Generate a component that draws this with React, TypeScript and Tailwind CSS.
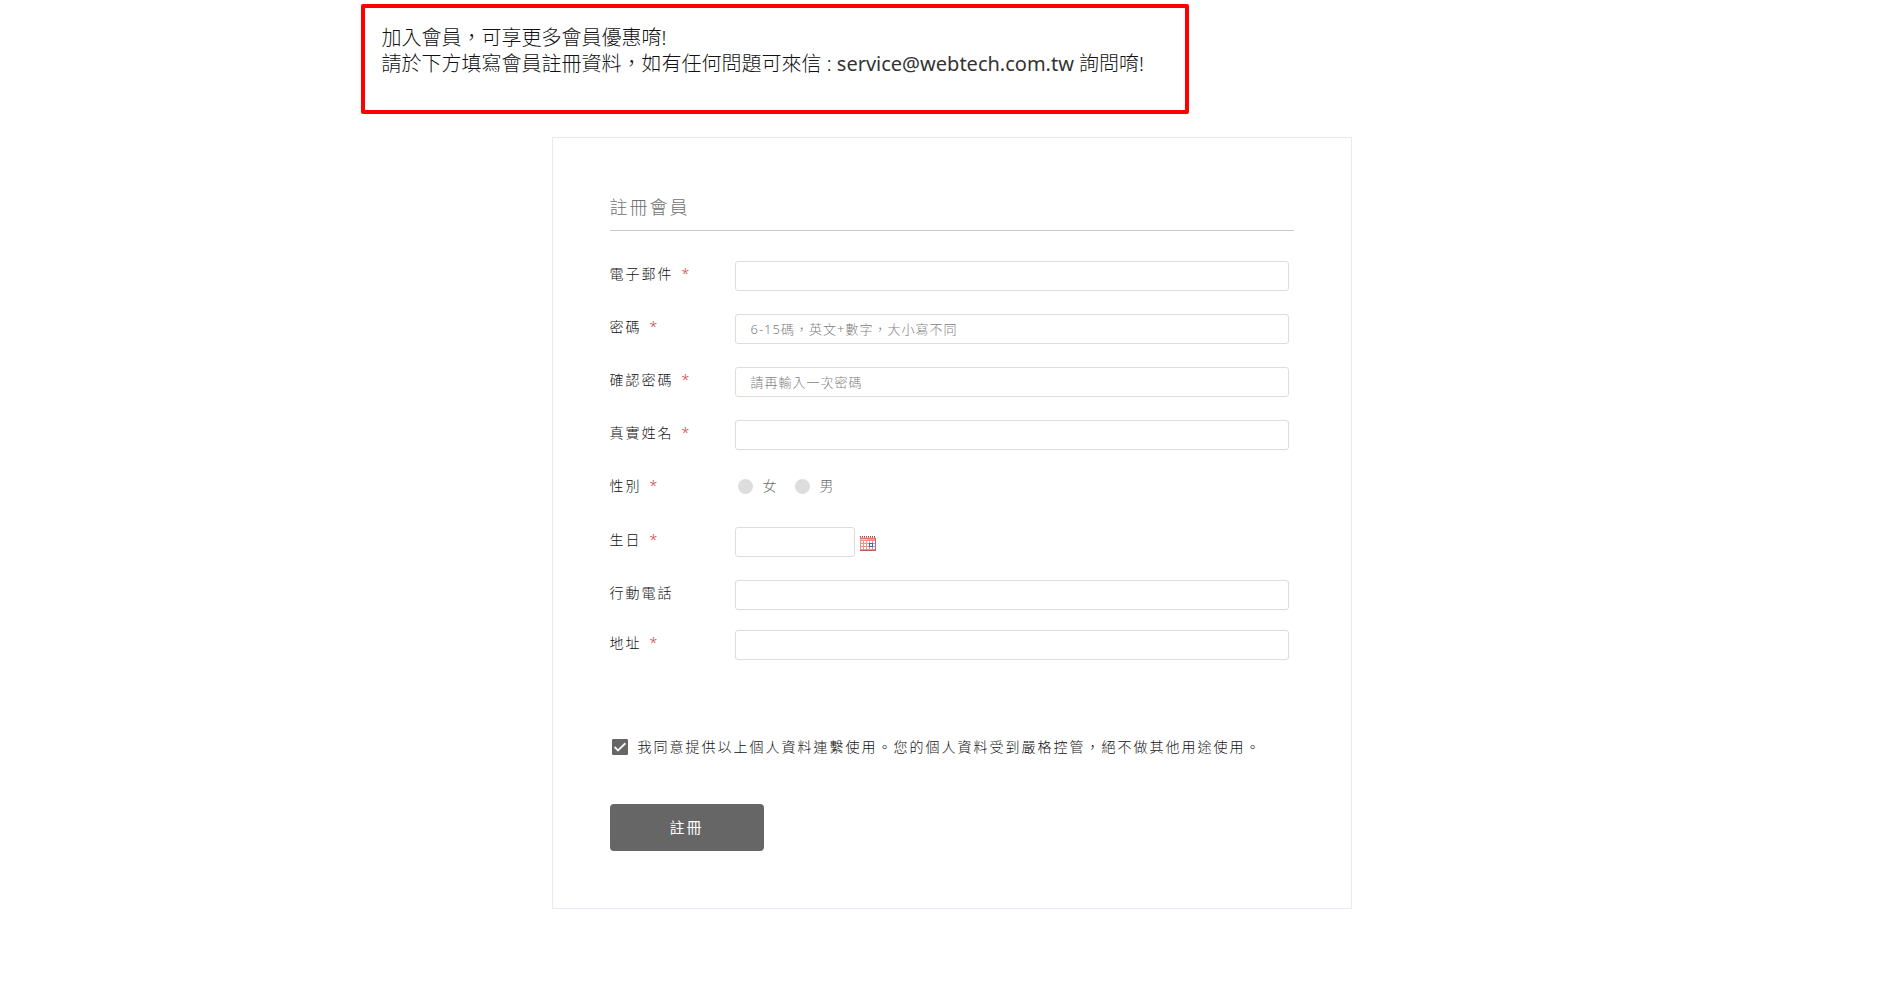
import React, { useId } from "react";

type FieldProps = {
  label: string;
  required?: boolean;
  type?: string;
  placeholder?: string;
};

const inputClass =
  "block h-[30px] rounded-[3px] border border-[#dddddd] bg-white px-[15px] text-[13px] tracking-[1px] text-[#333333] outline-none placeholder:text-[#808080] placeholder:opacity-100 focus:border-[#999999]";

function Star() {
  return <span className="ml-2 text-[#d03c38]">*</span>;
}

function Field({ label, required = false, type = "text", placeholder }: FieldProps) {
  const id = useId();
  return (
    <div className="flex items-start">
      <label htmlFor={id} className="w-[125px] shrink-0 leading-[26px]">
        {label}
        {required && <Star />}
      </label>
      <input
        id={id}
        type={type}
        placeholder={placeholder}
        className={`${inputClass} mr-[5px] min-w-0 flex-1`}
      />
    </div>
  );
}

function GenderOption({ label }: { label: string }) {
  return (
    <label className="flex items-center gap-[10px] text-[#6a6a6a]">
      <input
        type="radio"
        name="gender"
        value={label}
        className="size-[15px] appearance-none rounded-full bg-[#dddddd] checked:bg-[#666666]"
      />
      <span>{label}</span>
    </label>
  );
}

function CalendarIcon() {
  const teeth = [0, 2, 4, 6, 8, 10, 12, 14];
  const columns = [1, 4, 7, 10, 13];
  const rows = [5, 8, 11];
  return (
    <svg width="16" height="15" viewBox="0 0 16 15" shapeRendering="crispEdges" aria-hidden="true">
      <rect y="1" width="16" height="14" fill="#f28f86" />
      <rect y="1" width="16" height="2" fill="#ec7468" />
      {teeth.map((x) => (
        <rect key={x} x={x} y="0" width="1" height="1" fill="#8f4a4a" />
      ))}
      {teeth.map((x) => (
        <rect key={x} x={x + 1} y="1" width="1" height="1" fill="#f7d5d1" />
      ))}
      <rect x="1" y="3" width="6" height="1" fill="#fbd3cf" />
      <rect x="7" y="3" width="8" height="1" fill="#f3a49d" />
      {rows.map((y) =>
        columns.map((x) => (
          <rect key={`${x}-${y}`} x={x} y={y} width="2" height="2" fill="#ffffff" />
        )),
      )}
      <rect x="0" y="14" width="16" height="1" fill="#b55f5b" />
      <rect x="15" y="2" width="1" height="13" fill="#c06a64" />
      <rect x="9" y="7" width="4" height="4" fill="#2668d8" />
      <rect x="10" y="8" width="2" height="2" fill="#ffffff" />
    </svg>
  );
}

export default function App() {
  return (
    <main className="min-h-screen bg-white px-4 pt-1 pb-10 font-['Noto_Sans','Noto_Sans_CJK_TC',sans-serif] font-light text-[#111111]">
      <div className="mx-auto max-w-[1182px]">
        <section className="max-w-[828px] rounded-[2px] border-4 border-[#ff0000] px-[17px] pt-[17px] pb-[33px] text-[20px] leading-[26px]">
          <p>加入會員，可享更多會員優惠唷!</p>
          <p>
            請於下方填寫會員註冊資料，如有任何問題可來信 :{" "}
            <span className="font-normal text-[#333333]">service@webtech.com.tw</span> 詢問唷!
          </p>
        </section>
      </div>

      <form
        className="mx-auto mt-[23px] max-w-[800px] border border-[#e9e9f3] p-[57px] text-[14px] tracking-[2px]"
        onSubmit={(event) => event.preventDefault()}
      >
        <h1 className="border-b border-[#c8c8c8] pb-[11px] text-[18px] leading-[24px] text-[#707070]">
          註冊會員
        </h1>

        <div className="mt-[30px] flex flex-col gap-[23px]">
          <Field label="電子郵件" required type="email" />
          <Field label="密碼" required type="password" placeholder="6-15碼，英文+數字，大小寫不同" />
          <Field label="確認密碼" required type="password" placeholder="請再輸入一次密碼" />
          <Field label="真實姓名" required />

          <fieldset className="h-[31px]">
            <div className="flex items-center leading-[26px]">
              <legend className="w-[125px] shrink-0">
                性別
                <Star />
              </legend>
              <div className="flex gap-4 pl-[3px]">
                <GenderOption label="女" />
                <GenderOption label="男" />
              </div>
            </div>
          </fieldset>

          <div className="flex items-start">
            <label htmlFor="birthday" className="w-[125px] shrink-0 leading-[26px]">
              生日
              <Star />
            </label>
            <div className="flex items-center gap-[5px]">
              <input id="birthday" type="text" className={`${inputClass} w-[120px]`} />
              <button type="button" aria-label="選擇日期" className="pt-[3px]">
                <CalendarIcon />
              </button>
            </div>
          </div>

          <div className="flex flex-col gap-5">
            <Field label="行動電話" type="tel" />
            <Field label="地址" required />
          </div>
        </div>

        <label className="mt-[74px] flex items-center gap-[10px] pl-[2px] leading-[26px]">
          <span className="grid size-4 shrink-0 place-items-center">
            <input
              type="checkbox"
              defaultChecked
              className="peer col-start-1 row-start-1 size-4 appearance-none rounded-[1px] border border-[#666666] checked:bg-[#666666]"
            />
            <svg
              viewBox="0 0 16 16"
              className="pointer-events-none invisible col-start-1 row-start-1 size-4 peer-checked:visible"
              aria-hidden="true"
            >
              <path d="M2.6 8 6 11.4 13.4 4.2" fill="none" stroke="#f4f4f4" strokeWidth="1.9" />
            </svg>
          </span>
          <span>我同意提供以上個人資料連繫使用。您的個人資料受到嚴格控管，絕不做其他用途使用。</span>
        </label>

        <button
          type="submit"
          className="mt-11 block h-[47px] w-[154px] rounded-[4px] bg-[#666666] text-[15px] font-normal tracking-[2px] text-white"
        >
          註冊
        </button>
      </form>
    </main>
  );
}
